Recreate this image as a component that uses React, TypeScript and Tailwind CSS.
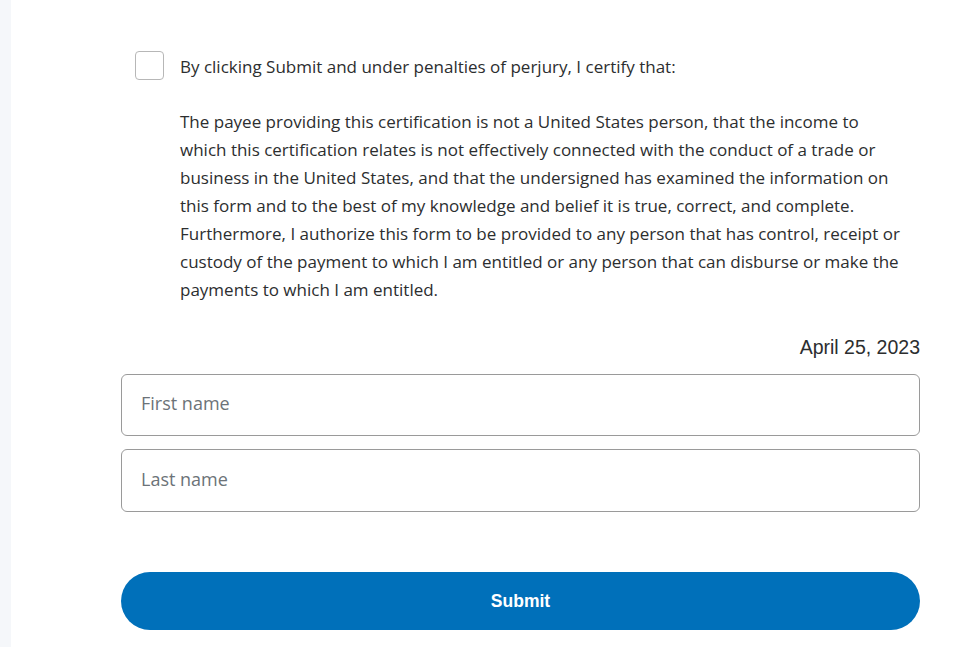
export default function App() {
  return (
    <div className="flex min-h-[647px] w-full bg-white">
      <div className="w-[11px] shrink-0 bg-[#f5f7fa]" />
      <div className="flex flex-1 flex-col pl-[110px] pr-[42px]">
        <div className="mt-[51px] flex items-start pl-[14px]">
          <div className="h-[29px] w-[29px] shrink-0 rounded-[4px] border border-[#b7b7b7] bg-white" />
          <div className="ml-[16px] flex flex-col text-[17px] leading-[28px] text-[#2c2e2f]" style={{ fontFamily: "'Open Sans', sans-serif" }}>
            <p className="mt-[2px]">By clicking Submit and under penalties of perjury, I certify that:</p>
            <p className="mt-[27px] w-[724px]">
              The payee providing this certification is not a United States person, that the income to which this certification relates is not effectively connected with the conduct of a trade or business in the United States, and that the undersigned has examined the information on this form and to the best of my knowledge and belief it is true, correct, and complete. Furthermore, I authorize this form to be provided to any person that has control, receipt or custody of the payment to which I am entitled or any person that can disburse or make the payments to which I am entitled.
            </p>
          </div>
        </div>
        <div className="mt-[31px] text-right text-[19.5px] leading-[24px] text-[#2c2e2f]" style={{ fontFamily: "'Liberation Sans', Arial, sans-serif" }}>
          April 25, 2023
        </div>
        <div className="mt-[15px] flex h-[62px] items-center rounded-[6px] border border-[#9a9a9a] px-[19px] pb-[3px] text-[18px] text-[#6c7378]" style={{ fontFamily: "'Open Sans', sans-serif" }}>
          First name
        </div>
        <div className="mt-[13px] flex h-[63px] items-center rounded-[6px] border border-[#9a9a9a] px-[19px] pb-[2px] text-[18px] text-[#6c7378]" style={{ fontFamily: "'Open Sans', sans-serif" }}>
          Last name
        </div>
        <button className="mt-[60px] flex h-[58px] items-center justify-center rounded-full bg-[#0070ba] pt-[1px] text-[17.5px] font-bold text-white" style={{ fontFamily: "'Liberation Sans', Arial, sans-serif" }}>
          Submit
        </button>
      </div>
    </div>
  );
}
